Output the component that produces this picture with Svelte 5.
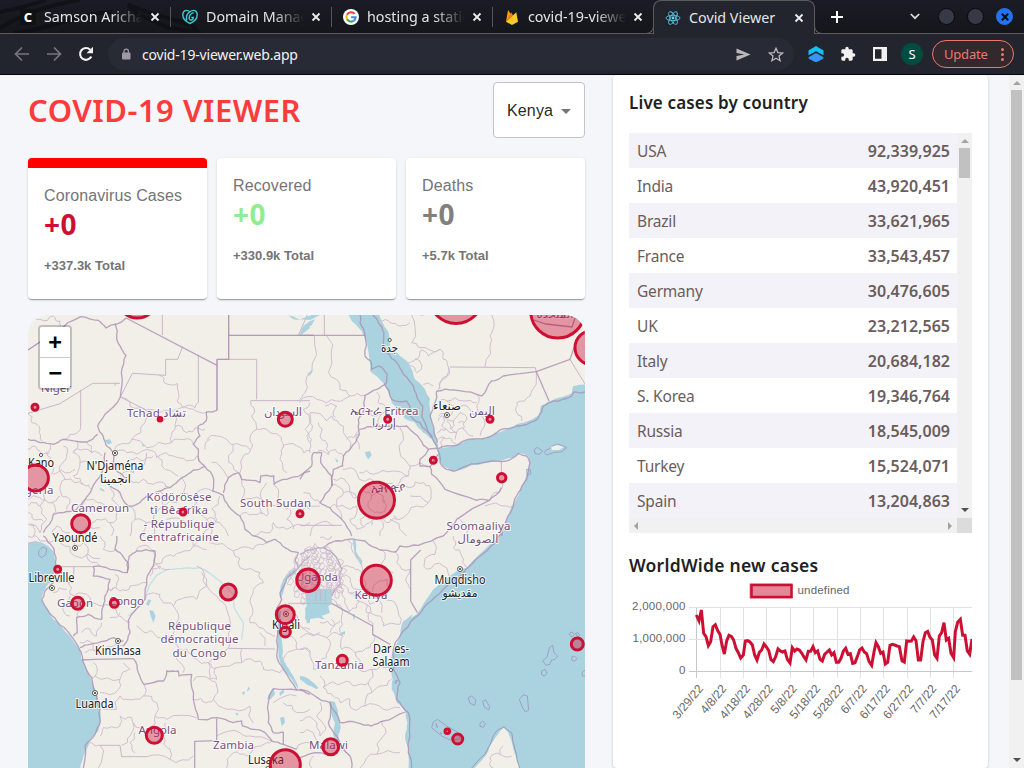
<script>
  const tabs = [
    { title: 'Samson Aricha', icon: 'c' },
    { title: 'Domain Manager', icon: 'g' },
    { title: 'hosting a static site', icon: 'google' },
    { title: 'covid-19-viewer', icon: 'fire' },
    { title: 'Covid Viewer', icon: 'react', active: true }
  ];
  const stats = [
    { label: 'Coronavirus Cases', value: '+0', total: '+337.3k Total', kind: 'cases' },
    { label: 'Recovered', value: '+0', total: '+330.9k Total', kind: 'recovered' },
    { label: 'Deaths', value: '+0', total: '+5.7k Total', kind: 'deaths' }
  ];
  const rows = [
    ['USA', '92,339,925'], ['India', '43,920,451'], ['Brazil', '33,621,965'],
    ['France', '33,543,457'], ['Germany', '30,476,605'], ['UK', '23,212,565'],
    ['Italy', '20,684,182'], ['S. Korea', '19,346,764'], ['Russia', '18,545,009'],
    ['Turkey', '15,524,071'], ['Spain', '13,204,863']
  ];

  // Subdivides a polyline with small seeded offsets, so that borders look surveyed.
  function rough(str, amp = 0.16) {
    const src = str.trim().split(/\s+/).map((p) => p.split(',').map(Number));
    let seed = Math.round(Math.abs(src[0][0] * 13 + src[0][1] * 7)) + 11;
    const rnd = () => ((seed = (seed * 16807 + 7) % 2147483647) / 2147483647) - 0.5;
    let pts = src;
    for (let k = 0; k < 2; k++) {
      const out = [pts[0]];
      for (let i = 1; i < pts.length; i++) {
        const [a, b] = pts[i - 1];
        const [c, d] = pts[i];
        const len = Math.hypot(c - a, d - b);
        if (len > 11) {
          const o = rnd() * Math.min(len, 45) * amp * 2;
          out.push([(a + c) / 2 - ((d - b) / len) * o, (b + d) / 2 + ((c - a) / len) * o]);
        }
        out.push(pts[i]);
      }
      pts = out;
    }
    return 'M' + pts.map(([x, y]) => x.toFixed(1) + ' ' + y.toFixed(1)).join('L');
  }

  // Map sheets: each is drawn on a 3x grid, offset to its quarter of the map.
  const sheets = [
    {
      x: 20, y: 306,
      straight: ['427,27 427,87', '626,27 626,160 591,160 591,313', '626,88 880,88', '710,160 626,160', '710,160 710,280', '692,284 870,284', '535,147 535,290', '862,27 835,88', '24,132 60,108', '218,232 300,232', '182,252 182,360', '437,160 473,160 488,122', '437,160 437,208 337,202 301,273', '24,322 120,293 218,232', '301,273 378,312'],
      thick: ['318,36 591,178', '626,27 626,160 591,160 591,313', '626,88 880,88', '24,132 60,108'],
      major: ['110,75 182,32 235,43 258,66 318,36', '285,52 290,98 305,130 318,148 304,200 301,273', '301,273 255,325 233,360 250,392 258,418 280,440 286,490 318,520', '233,385 200,408 130,400 100,415 60,410 24,400', '591,313 560,318 558,345 535,360 540,390 520,415 535,430 537,465 555,482', '555,482 520,492 485,515 450,545 420,555 375,575 340,600 325,600', '555,482 580,515 578,555 610,568 625,600 660,630 675,670 700,690', '610,560 625,515 655,500 665,520 720,530 722,510 762,510 762,535 800,520 870,495', '255,440 245,500 215,550 195,580 170,610 130,620 100,625 70,680', '325,600 300,560 270,540'],
      minor: ['182,360 150,385 130,400', '24,320 35,350 60,370 65,405', '24,45 60,40 100,30 120,45 122,60', '378,312 375,350 335,400', '301,273 330,300 378,312 450,312', '418,208 435,232 472,232 472,285 490,305 525,305 535,290', '455,312 465,370 455,410 380,425 335,400 300,415 285,430', '465,362 500,380 525,365 555,370', '462,312 520,310 560,318', '415,450 460,450 500,465 530,450', '415,450 425,480 475,510', '285,440 320,440 380,430 410,455 415,450', '330,460 370,465 400,450', '300,510 340,500 370,480 380,440', '692,284 695,330 710,370 690,400 692,430 670,450 665,520', '710,370 750,380 785,395 790,425 780,460 800,500', '785,425 830,420 850,440 870,435', '870,290 850,310 870,350 860,390 870,410', '560,400 590,390 620,400 640,415 680,420 690,430', '555,430 570,400', '640,415 625,450 640,480 655,500', '575,470 600,480 625,515', '90,415 80,440 100,470 95,505', '130,420 140,455 120,480 135,520 120,550 150,580 140,610', '170,405 160,440 180,470 160,510 190,535 215,550', '200,408 215,440 245,450', '24,430 50,425 65,445 90,440', '100,505 150,500 165,490', '24,580 60,575 95,590 120,570', '70,560 60,600 80,640 60,680', '24,620 40,640 70,645', '180,600 220,580 240,590 280,600', '270,540 275,580 300,610 280,650 230,640 215,650', '325,600 345,640 330,690', '345,640 380,660 370,690', '270,650 275,690', '420,555 430,600 400,640 400,690', '485,515 490,560 530,570 520,610 560,640 550,690', '600,570 575,610 590,640 570,690', '530,560 578,555', '660,630 700,625 740,630 745,600', '665,520 665,580 725,580 725,625', '725,580 740,530', '762,535 775,570 765,600 800,610 850,600 870,610', '700,690 750,680 760,650 800,670 870,650', '430,312 430,345', '285,240 290,230', '200,690 205,660 240,665', '100,690 110,660 150,680',
        '160,440 190,430 215,440', '180,470 220,480 250,470', '290,480 320,490 340,500', '450,545 430,530 400,535 370,520 340,530 318,520', '530,450 537,465', '455,410 480,400 520,415', '24,600 50,590 60,600', '30,650 45,670 40,690', '135,520 165,530 190,535', '95,590 100,625', '370,660 395,650 400,640', '430,600 470,590 490,560', '810,610 800,640 820,670', '745,600 765,600', '560,640 600,650 625,690', '440,640 500,650 520,640', '24,655 60,680'],
      lakes: ['255,402 270,400 276,412 262,415', '238,545 250,550 255,558 242,553', '835,90 850,68 866,58 870,66 850,82', '805,28 822,32 840,42 820,40', '365,412 375,420 368,422', '862,198 872,205 866,210']
    },
    {
      x: 300, y: 306,
      water: ['145,27 155,45 185,75 200,110 207,150 210,195 235,215 255,235 265,260 275,290 300,315 315,338 345,350 370,380 395,400 412,425 415,460 430,480 455,495 490,490 515,478 560,470 600,465 640,455 660,442 685,450 688,465 685,490 675,520 655,570 635,600 620,640 600,700 900,700 900,232 855,235 820,240 815,262 790,272 750,285 722,300 715,328 690,343 650,355 620,370 580,385 540,400 500,403 470,415 430,425 415,428 402,370 390,310 390,280 375,250 345,220 335,190 320,165 300,150 270,125 266,80 245,45 238,27'],
      straight: ['73,27 73,88', '450,183 706,185 709,197', '810,160 855,234', '604,465 604,500', '0,658 125,658'],
      thick: ['0,88 195,88', '709,197 747,285', '822,125 810,160 709,197'],
      major: ['195,88 195,150 212,165 215,190 235,180 262,205 260,230 230,250 195,268 193,300 175,340 178,385 150,430 130,450 128,480 100,490 95,540 60,590 90,605 125,640 155,690', '180,27 180,50 195,90', '218,27 235,50 252,80 250,110 262,140 290,170 310,205 340,240 350,270 368,300 365,330 395,390 412,425', '252,232 275,280 320,285 330,300 325,325 360,350 395,395', '178,370 230,362 290,360 320,360 360,400 385,430 415,428', '415,428 470,418 505,400 560,395 600,372 650,360 690,350 715,335 730,300 760,285 815,270 822,258 855,258', '410,255 460,252 530,265 545,270 575,225 610,210 709,197', '410,255 405,290 390,330 402,375 412,410', '385,430 360,460 360,480 390,482 415,445', '390,482 395,505 435,550 530,583 568,583 470,640 430,690', '604,545 568,583', '412,430 420,470 440,490 465,495 500,480 560,468 620,465 655,442 680,450 690,470 680,520 655,560 640,600 620,640 605,690', '0,520 35,480 40,440 65,440 62,470 95,510 97,540'],
      minor: ['240,45 270,50 300,60 330,50', '335,27 335,110 360,125 420,130', '575,27 570,90 575,100 555,183', '360,135 345,160 325,170', '360,135 385,150 400,140 420,130 430,160 445,183 430,220 415,250', '330,180 350,200 365,190 360,165 345,160', '445,183 440,210 420,250', '370,235 400,240', '709,197 690,270 650,290 650,320 665,345', '530,265 530,300 545,330 540,390', '440,285 490,285 530,290', '415,285 450,290 470,310 500,300 530,325', '480,320 500,340 490,370 520,390', '415,345 430,330 460,345 480,320', '412,380 440,370 470,380 490,365', '425,425 430,395 455,400 470,415', '440,345 450,370', '455,310 450,330 415,330', '360,27 370,28', '43,90 35,200 15,260 0,290', '80,90 85,200 120,250 150,270 195,268', '0,285 50,280 110,285 150,270', '30,320 15,370 35,400 30,440', '30,320 80,345 95,330 130,360 150,430', '75,300 110,300 105,335', '50,440 85,445 105,430 130,450', '230,258 235,290 255,300 240,330 240,362', '180,325 230,330 260,320', '178,430 180,370', '300,365 300,440 330,480 325,510 290,540', '330,480 390,482', '178,500 220,505 280,495 325,510', '128,490 170,500 178,520 240,525', '100,520 140,530 150,560 170,575', '285,540 330,545 370,530 390,540 385,590 350,600 300,640 280,630', '330,570 385,590', '170,600 150,640 170,670 210,650 225,640', '215,570 250,570 260,600 240,620 210,610 215,570', '240,640 240,690', '555,600 620,600 650,590', '607,500 607,545 570,583', '10,560 40,580 60,590', '0,620 60,600', '30,690 60,650 100,660', '480,640 500,690', '270,640 310,680 320,690', '310,300 300,285',
        '430,330 425,360 440,370', '460,345 455,370 470,380 465,400', '415,400 435,395', '475,350 495,350', '130,560 170,575 190,555 215,570', '95,540 120,545 130,560 110,590 125,640', '195,620 180,640 190,660', '90,605 120,600 150,610 170,600', '205,640 260,650 290,640', '140,400 160,395 178,385', '55,350 60,390 80,410 85,445', '250,540 285,540'],
      islands: ['738,432 750,428 757,420 775,414 800,425 785,437 760,440 740,447 733,440', '703,430 712,424 728,435 718,445 705,443', '680,490 690,490 693,502 682,510'],
      lakes: ['195,438 210,435 215,448 205,460 198,450', '0,80 10,60 30,45 45,40 35,58 15,70', '0,40 35,27 60,27 30,42', '28,198 40,190 30,208', '105,455 115,465 110,470', '215,645 220,650 214,660', '250,580 256,585 252,592']
    },
    {
      x: 20, y: 536,
      water: ['20,20 60,18 75,25 85,30 100,45 104,65 106,95 95,130 80,150 63,190 80,215 100,250 150,300 180,340 185,370 205,410 225,460 240,510 243,555 235,585 210,610 195,650 180,700 20,700',
        '768,225 775,260 772,310 775,360 790,400 815,430 835,460 820,420 800,390 787,360 785,310 780,270 785,225', '782,150 800,115 825,95 830,110 800,130 790,170 780,190', '740,490 755,465 762,455 765,475 752,490', '848,422 870,432 870,450 855,440', '855,215 870,210 870,260 860,262'],
      straight: ['160,92 220,92', '625,337 765,339', '108,92 162,92 160,140 110,138', '805,202 870,202', '235,628 300,628 305,662 380,662'],
      thick: ['185,372 225,370 340,368', '524,696 524,616 590,614 590,548', '790,588 790,625 830,640'],
      major: ['70,0 85,20 102,40 108,65 106,92', '106,92 100,140 75,165 65,190 85,225 110,255 150,295 178,340 188,375 215,425 230,480 240,520 240,560 225,595 195,630 190,696', '220,92 220,120 270,130 265,160 255,180 250,210 245,250 205,235 170,245 172,290 160,300', '220,92 270,100 322,110 325,80 300,50 285,40 290,0', '322,110 328,60 350,45 405,45 400,90 380,130 375,190 340,230 325,260 330,290 310,330', '340,368 355,410 372,445 430,435 440,405 475,405 477,420 515,415 520,490 535,550 590,545 640,560 665,555 668,570 700,580 735,590 755,615 790,625', '700,0 740,20 765,10 795,35 835,50 825,75 835,95 800,125 780,170 785,190 768,225', '768,225 780,260 772,300 770,360 790,400 830,462 760,458 745,500 745,560 760,590 790,588', '310,315 280,305 255,315 210,325 180,335', '835,95 870,60', '830,462 870,475'],
      minor: ['350,45 370,28 405,45', '190,20 200,60 240,90', '120,20 165,60 240,68', '24,0 60,15 100,15', '145,140 150,175 200,175 210,205 245,210', '100,170 140,160', '150,240 130,210 150,180', '265,160 300,165 330,150 380,140', '375,190 400,170 420,175 430,200 460,210 480,190 530,190 560,150 545,110', '390,120 420,90 450,100', '530,90 560,150 590,180 620,220 630,280 625,337', '420,100 400,45', '640,45 660,95 720,110 730,140 700,160 695,210 690,260 740,290 765,300', '560,0 570,20 640,45 700,40 740,20', '625,337 565,380 570,430 520,435', '565,380 530,370 500,340 475,335 460,300 430,310 400,290 375,290 350,270', '475,335 470,370 490,410', '570,430 590,430 590,395 665,380 665,340', '665,380 720,375 730,400 780,410 790,400', '700,560 690,510 620,520 580,490 590,450 570,430', '220,380 225,420 300,430 295,460 240,470', '300,430 330,400 310,380', '372,445 370,480 320,490 300,480 290,520 240,510', '370,480 410,500 405,540 440,550', '440,550 530,545', '335,545 300,540 300,570 250,575 240,600', '335,545 330,600 305,628', '405,540 390,580 340,560', '235,628 215,620 195,630', '240,628 235,696', '380,662 450,670 520,660', '345,590 330,620 345,650', '435,560 430,600 450,640 450,670', '185,290 210,280 230,300 245,260', '180,320 220,325 225,345 195,350', '245,210 290,225 310,250 330,260', '285,115 290,150 270,165', '680,660 740,620 755,615', '590,600 660,590 690,600 755,615', '620,696 640,650 680,660', '760,500 830,480', '790,500 830,530 870,520', '830,640 870,620', '790,230 820,225 830,260 870,280', '790,370 830,340 870,350', '800,300 830,320 830,340', '500,0 520,30 560,40', '720,290 735,330', '300,230 270,245', '530,20 480,50 440,60 400,90',
        '24,40 50,15', '150,0 165,30 190,20', '240,0 250,40 290,40', '170,245 180,225 200,200', '460,210 470,260 460,300', '225,420 215,425', '520,490 560,500 580,490', '590,395 565,380', '250,350 280,330 310,330'],
      river: '325,240 345,225 375,190 390,145 410,118 445,100 500,96 540,95 570,112 600,135 640,175 645,220 670,260 665,310',
      islands: ['56,45 68,33 80,38 78,55 65,65 56,58'],
      lakes: ['385,190 394,193 386,210 378,205', '388,222 400,225 407,240 400,260 392,240', '665,470 675,465 672,478', '685,452 690,458 680,468', '780,545 792,542 795,560 785,570', '778,470 790,460 793,468 780,480', '645,530 655,532 652,540']
    },
    {
      x: 300, y: 536,
      water: ['606,-12 570,25 500,95 480,100 400,160 350,235 310,255 303,275 300,300 275,360 270,400 278,430 275,460 290,500 315,525 322,560 315,600 325,640 325,700 520,700 560,655 570,630 590,600 610,575 625,590 640,640 660,700 900,700 900,-12',
        '15,170 30,160 50,158 95,158 95,205 85,210 90,230 65,240 75,250 55,245 15,250 20,215 18,190', '158,12 166,12 168,45 185,75 182,88 165,60', '90,495 105,498 115,540 122,570 115,600 130,655 100,600 105,560 92,520', '0,420 20,425 55,455 50,460 20,445 0,430', '158,235 164,235 162,255', '120,292 135,285 135,295 118,298', '315,255 340,235 325,262'],
      straight: ['0,202 95,202', '48,160 48,195', '62,160 62,195', '76,160 76,195'],
      thick: ['95,202 218,270 218,295 270,325', '362,42 332,72 332,195 352,230'],
      major: ['0,55 40,40 70,35 105,15 145,10 195,15 240,42 285,48 300,30 355,28 430,0', '605,-10 560,45 500,98 430,160 380,205 345,245 300,300 280,340 280,400 300,440 290,490 325,530 330,600 325,650 335,696', '70,35 110,65 125,100 120,145 95,180', '0,460 45,480 90,500 120,560 170,560 215,570 250,555 315,528', '90,500 85,560 110,600 150,660 155,696', '0,665 60,650 90,655'],
      minor: ['145,10 155,40 185,75 185,110', '240,42 255,60 245,90 280,110', '285,48 290,80 330,100 320,140 332,160', '125,100 160,95 185,110', '120,145 145,170 165,180 190,200', '190,200 200,230 240,240 250,270 300,265', '185,120 190,160 235,190 245,230', '262,130 255,190 290,210 300,265', '235,190 220,150 262,130', '170,180 170,215 150,225 110,205', '380,100 430,90 450,130', '380,100 385,60 405,55 400,15', '460,0 460,35 485,60 500,95', '0,305 40,300 80,305 100,290 130,300 125,340 165,350 210,335 218,295', '80,305 85,345 60,375', '165,350 175,400 215,400 270,395', '215,400 205,440 215,470 195,510 160,520 150,490 120,500', '0,340 30,345 40,400 60,395', '60,420 70,455 100,480 120,500', '70,455 130,440 165,450 205,440', '195,510 250,520 300,515', '275,430 240,450 215,470', '95,0 80,10 60,5', '110,205 125,240 120,290', '60,260 100,270 120,255', '60,290 0,270', '0,590 40,590 60,620', '35,696 40,660', '180,696 230,655 300,650', '230,655 250,600 245,555', '150,660 130,620', '60,500 50,540 75,570 60,600', '0,555 40,550 60,600', '580,696 570,665 600,655 635,660', '600,655 610,630',
        '100,170 130,165 135,190 150,225', '90,190 110,205', '105,150 125,160', '125,120 150,125 155,150 190,160', '150,175 185,175 210,205 225,200', '200,205 205,250 218,270', '95,250 90,290'],
      islands: ['395,575 400,558 412,550 440,570 475,590 480,608 455,614 425,600', '505,485 515,480 528,492 524,508 510,502', '548,495 557,492 569,512 566,522 552,512', '658,490 670,476 682,480 686,522 676,528 666,512', '748,335 758,328 762,350 773,360 765,370 755,372 750,385 738,388 728,375 742,362', '725,405 735,400 741,412 733,420 725,416', '540,562 548,556 557,563 550,574 540,571', '810,290 816,288 823,296 816,303 809,298', '826,292 833,290 839,297 834,303', '816,362 823,360 831,368 824,376 815,372', '846,410 852,404 860,404 860,422 848,420', '408,562 412,575', '420,590 426,594', '283,437 292,432 288,443'],
      coast: ['512,700 555,655 568,630 590,585 612,572 635,590 645,640 660,700'],
      lakes: []
    }
  ];

  // Small parishes around Kampala and the Nile, packed as a grid of wobbling cells.
  const cells = [];
  for (let i = 0; i < 11; i++) {
    for (let j = 0; j < 11; j++) {
      const x = 290 + i * 5, y = 548 + j * 5.6;
      if ((x - 315) ** 2 / 700 + (y - 575) ** 2 / 900 < 1 && !(y > 588 && x > 303 && x < 332)) {
        const w = ((i * 7 + j * 5) % 5) - 2, v = ((i * 3 + j * 11) % 5) - 2;
        cells.push(`M${x + w * 0.6} ${y + v * 0.6}l${3 + v} ${-2 + w * 0.7}l3 ${3 - v * 0.5}l${-2 + w * 0.5} 4l${-4 - v * 0.3} -1z`);
      }
    }
  }

  const places = [
    { t: 'Niger', x: 56, y: 392, w: 30 },
    { t: 'Tchad تشاد', x: 156.5, y: 416.5, w: 59 },
    { t: 'السودان', x: 283, y: 416, w: 38 },
    { t: 'ኤርትራ Eritrea', x: 384, y: 415, w: 69 },
    { t: 'إرتريا', x: 384, y: 427, w: 24 },
    { t: 'اليمن', x: 482, y: 415, w: 26 },
    { t: 'ኢትዮጵያ', x: 387.5, y: 492, w: 34 },
    { t: 'Nigeria', x: 33, y: 493.5, w: 41 },
    { t: 'Cameroun', x: 100, y: 512, w: 58 },
    { t: 'Ködörösêse', x: 179, y: 501, w: 65 },
    { t: 'tî Bêafrîka', x: 179, y: 514, w: 58 },
    { t: '- République', x: 179, y: 527.5, w: 71 },
    { t: 'Centrafricaine', x: 179, y: 541, w: 80 },
    { t: 'South Sudan', x: 275.5, y: 506.5, w: 71 },
    { t: 'Soomaaliya', x: 478.5, y: 530, w: 64 },
    { t: 'الصومال', x: 478, y: 543, w: 41 },
    { t: 'Gabon', x: 75, y: 606.5, w: 36 },
    { t: 'Congo', x: 126.5, y: 605, w: 35 },
    { t: 'République', x: 199.5, y: 629.5, w: 63 },
    { t: 'démocratique', x: 199.5, y: 643, w: 78 },
    { t: 'du Congo', x: 199.5, y: 656.5, w: 54 },
    { t: 'Uganda', x: 317, y: 580.5, w: 42 },
    { t: 'Kenya', x: 371, y: 598.5, w: 33 },
    { t: 'Tanzania', x: 339.5, y: 669, w: 49 },
    { t: 'Angola', x: 157.5, y: 734, w: 38 },
    { t: 'Zambia', x: 233.5, y: 748.5, w: 41 },
    { t: 'Malawi', x: 328.5, y: 748.5, w: 39 }
  ];
  const cities = [
    { t: 'جدة', x: 389.5, y: 352, w: 17, dx: 389.7, dy: 340, small: true },
    { t: 'صنعاء', x: 447, y: 410, w: 28, dx: 447, dy: 415 },
    { t: 'Kano', x: 41, y: 466.5, w: 26, dx: 41, dy: 455, small: true },
    { t: "N'Djaména", x: 115, y: 470, w: 57, dx: 115, dy: 453 },
    { t: 'انجمينا', x: 115.5, y: 483, w: 31 },
    { t: 'Yaoundé', x: 75, y: 542, w: 45, dx: 75, dy: 548 },
    { t: 'Libreville', x: 51.5, y: 582, w: 46, dx: 52, dy: 588 },
    { t: 'Kinshasa', x: 118, y: 655, w: 46, dx: 118, dy: 641 },
    { t: 'Luanda', x: 94.5, y: 707.5, w: 38, dx: 95, dy: 693 },
    { t: 'Kigali', x: 286, y: 629, w: 28, dx: 286, dy: 614 },
    { t: 'Lusaka', x: 266, y: 764, w: 36, dx: 268, dy: 769 },
    { t: 'Muqdisho', x: 460, y: 583.5, w: 51, dx: 460, dy: 569 },
    { t: 'مقديشو', x: 460, y: 597, w: 35 },
    { t: 'Dar es-', x: 391, y: 653, w: 36, dx: 391, dy: 670, small: true },
    { t: 'Salaam', x: 391, y: 666, w: 37 }
  ];
  const circles = [
    [137.3, 298, 20], [35, 407.3, 3], [160, 419.3, 1.8], [285.3, 419.3, 7], [35.4, 478, 13], [80.7, 523.7, 9],
    [183, 512, 3], [300, 513.7, 3], [456, 297, 26.5], [557.7, 311, 27], [592, 347.7, 17], [387.7, 419.3, 3],
    [490, 419.3, 3], [433.3, 460.3, 3], [501.7, 477.7, 4.2], [376.5, 500.3, 18], [57.7, 569.3, 3], [77.7, 603.3, 6],
    [114.3, 603.3, 4], [228.3, 592, 8], [285.3, 614.7, 9], [285.3, 632, 5], [154.3, 735.3, 8], [285.3, 764.7, 15],
    [308, 580.3, 11.2], [376.3, 580.3, 15], [342.3, 660.3, 5], [577.3, 644, 6], [447.3, 731.3, 2.3], [457.7, 739, 5], [330.7, 746.7, 8]
  ];

  const series = '229,75 237,93 244,60 251,130 258,140 265,167 272,155 279,110 286,104 293,122 300,133 306,165 313,192 320,153 327,136 334,139 341,150 348,175 355,188 362,204 370,195 376,153 383,152 390,156 397,165 404,195 411,210 418,187 425,180 432,162 439,171 446,181 453,209 460,215 467,200 474,177 481,183 488,186 495,183 502,208 510,219 517,173 524,183 531,177 538,180 545,189 552,201 558,210 565,184 572,184 579,170 586,188 593,183 600,208 607,213 614,193 621,186 628,180 635,195 642,188 649,217 656,217 663,205 670,184 677,175 684,193 691,191 698,220 705,218 712,200 719,180 726,174 733,186 740,191 747,214 755,226 762,186 768,158 775,170 782,190 789,186 796,222 803,217 810,166 817,163 824,165 831,168 838,170 846,212 853,216 860,153 867,154 874,153 881,141 888,152 895,210 902,210 909,155 916,128 923,124 930,142 937,150 944,195 951,205 958,138 965,128 972,98 979,150 986,145 993,190 1001,203 1006,125 1013,97 1021,88 1028,136 1035,136 1042,183 1049,193 1056,147';
  const dates = ['3/29/22', '4/8/22', '4/18/22', '4/28/22', '5/8/22', '5/18/22', '5/28/22', '6/7/22', '6/17/22', '6/27/22', '7/7/22', '7/17/22'];
  const ticks = [229, 299, 370, 439, 510, 580, 650, 720, 790, 860, 929, 1000].map((v) => 620 + v / 3);
</script>

<div class="window">
  <div class="tabstrip">
    <svg class="skin" width="340" height="33" viewBox="0 0 340 33"><path d="M0 28C30 10 55 4 80 0M0 12C20 8 38 3 46 0M14 33C50 30 74 14 112 12M128 5l22 8 42 12 7 8-32-6-30-13z" fill="none" stroke="#0b0c10" stroke-width="4" /></svg>
    {#each tabs as tab}
      <div class="tab" class:active={tab.active}>
        <span class="fav">
          {#if tab.icon === 'c'}
            <span class="fav-c">C</span>
          {:else if tab.icon === 'g'}
            <svg width="16" height="16" viewBox="0 0 16 16" fill="none" stroke="#3fc8d0" stroke-width="1.4"><path d="M8 14.500C3 12.500.8 8.800.8 5.800.8 1.200 4.800.2 8 2.800c3.200-2.600 7.200-1.600 7.200 3 0 3-2.200 6.700-7.200 8.700zM4.800 11.500C3.800 7.500 5 4.500 8 2.800M11.600 3.600C8.800 4.500 7 7 7.200 9.300c.6 2.700 4 2.200 4.200-.8H9.300" /></svg>
          {:else if tab.icon === 'google'}
            <svg width="16" height="16" viewBox="0 0 16 16"><circle cx="8" cy="8" r="8" fill="#fff" /><g fill="none" stroke-width="2.1"><path d="M11.600 4.900A4.600 4.600 0 0 0 4 5.700" stroke="#ea4335" /><path d="M4 5.700a4.600 4.600 0 0 0 0 4.600" stroke="#fbbc05" /><path d="M4 10.300a4.600 4.600 0 0 0 7 1.200" stroke="#34a853" /><path d="M11 11.500c1-.8 1.600-2 1.600-3.300H8.100" stroke="#4285f4" /></g></svg>
          {:else if tab.icon === 'fire'}
            <svg width="16" height="16" viewBox="0 0 16 16"><path d="M2 12.800 4 1l3.500 5z" fill="#ffa000" /><path d="M2 12.800 7.200 3.200 9 6.500z" fill="#f57c00" /><path d="M2 12.800 12.300 3.300 14 12.800 8 16z" fill="#ffca28" /></svg>
          {:else}
            <svg width="16" height="16" viewBox="0 0 16 16"><rect width="16" height="16" rx="1" fill="#20232a" /><g fill="none" stroke="#55c4de" stroke-width=".9"><ellipse cx="8" cy="8" rx="7" ry="2.700" /><ellipse cx="8" cy="8" rx="7" ry="2.700" transform="rotate(60 8 8)" /><ellipse cx="8" cy="8" rx="7" ry="2.700" transform="rotate(120 8 8)" /></g><circle cx="8" cy="8" r="1.400" fill="#61dafb" /></svg>
          {/if}
        </span>
        <span class="title">{tab.title}</span>
        <svg class="close" width="10" height="10" viewBox="0 0 10 10"><path d="M1.500 1.500l7 7M8.500 1.500l-7 7" stroke="#eee" stroke-width="1.800" /></svg>
      </div>
    {/each}
    <svg class="plus" width="12" height="12" viewBox="0 0 12 12"><path d="M6 0v12M0 6h12" stroke="#fff" stroke-width="2" /></svg>
    <svg class="chev" width="10" height="7" viewBox="0 0 10 7"><path d="M.8 1l4.200 4.200L9.200 1" fill="none" stroke="#ddd" stroke-width="1.700" /></svg>
    <span class="dot"></span>
    <span class="dot"></span>
    <span class="dot quit"><svg width="8" height="8" viewBox="0 0 8 8"><path d="M.8.8l6.400 6.400M7.200.8L.8 7.200" stroke="#0b0c10" stroke-width="2" /></svg></span>
  </div>

  <div class="toolbar">
    <span class="tool"><svg width="16" height="16" viewBox="0 0 16 16"><path d="M15 8H2M8 1.500L1.500 8 8 14.500" fill="none" stroke="#76777b" stroke-width="1.700" /></svg></span>
    <span class="tool"><svg width="16" height="16" viewBox="0 0 16 16"><path d="M1 8h13M8 1.500L14.500 8 8 14.500" fill="none" stroke="#76777b" stroke-width="1.700" /></svg></span>
    <span class="tool"><svg width="16" height="16" viewBox="0 0 16 16"><path d="M13.300 10.500A5.900 5.900 0 1 1 12.200 3.800" fill="none" stroke="#f1f1f1" stroke-width="2.100" /><path d="M15 .8v6.500H8.500z" fill="#f1f1f1" /></svg></span>
    <div class="omnibox">
      <svg width="10" height="13" viewBox="0 0 10 13"><rect x="1" y="4.500" width="8.500" height="7" rx="1" fill="#9b9ca3" /><path d="M3 5V3.300a2.200 2.200 0 0 1 4.400 0V5" fill="none" stroke="#9b9ca3" stroke-width="1.300" /></svg>
      <span class="url">covid-19-viewer.web.app</span>
      <svg class="send" width="15" height="13" viewBox="0 0 15 13"><path d="M.5.5L14.500 6.500.5 12.500V8L8.500 6.500.5 5z" fill="#b9b9bc" /></svg>
      <svg class="star" width="16" height="15" viewBox="0 0 16 15"><path d="M8 1.300l1.900 4.300 4.700.4-3.600 3.100 1.100 4.600L8 11.200l-4.100 2.500L5 9.100 1.400 6l4.700-.4z" fill="none" stroke="#b9b9bc" stroke-width="1.300" /></svg>
    </div>
    <span class="tool"><svg width="16" height="16" viewBox="0 0 16 16"><path d="M.5 4.500L8 0l7.500 4.500v4.700L8 5.200.5 9.200z" fill="#13c0f4" /><path d="M.5 11.200L8 7l7.500 4.200-.3 1.500L8 16.500.8 12.700z" fill="#3695f0" /></svg></span>
    <span class="tool"><svg width="16" height="16" viewBox="0 0 24 24"><path d="M20.500 11H19V7c0-1.100-.9-2-2-2h-4V3.500a2.500 2.500 0 0 0-5 0V5H4c-1.100 0-2 .9-2 2v3.800h1.500a2.700 2.700 0 0 1 0 5.400H2V20c0 1.100.9 2 2 2h3.800v-1.500a2.700 2.700 0 0 1 5.400 0V22H17c1.100 0 2-.9 2-2v-4h1.500a2.500 2.500 0 0 0 0-5z" fill="#f1f1f1" /></svg></span>
    <span class="tool"><svg width="14" height="14" viewBox="0 0 14 14"><path d="M0 0h14v14H0zM2 2.200v9.600h6.500V2.200z" fill="#f1f1f1" fill-rule="evenodd" /></svg></span>
    <span class="tool"><span class="avatar">S</span></span>
    <div class="update">Update<span class="kebab"><i></i><i></i><i></i></span></div>
  </div>

  <div class="page">
    <main>
      <header>
        <h1>COVID-19 VIEWER</h1>
        <div class="select">Kenya<i class="caret"></i></div>
      </header>
      <section class="stats">
        {#each stats as s}
          <article class="card {s.kind}">
            <div class="label">{s.label}</div>
            <div class="value">{s.value}</div>
            <div class="total">{s.total}</div>
          </article>
        {/each}
      </section>
      <section class="map">
        <svg width="557" height="453" viewBox="28 315 557 453">
          <rect x="28" y="315" width="557" height="453" fill="#f2efe9" />
          {#each sheets as s}
            <g transform="translate({s.x} {s.y}) scale(.33333)" fill="none" stroke-linejoin="round">
              {#each s.water ?? [] as w}<path d={rough(w, 0.06) + 'Z'} fill="#aad3df" />{/each}
            </g>
          {/each}
          {#each sheets as s}
            <g transform="translate({s.x} {s.y}) scale(.33333)" fill="none" stroke-linejoin="round">
              {#if s.river}<path d={rough(s.river, 0.05)} stroke="#c5e0e6" stroke-width="4" />{/if}
              {#each s.lakes as l}<polygon points={l} fill="#aad3df" />{/each}
              {#each s.minor as m}<path d={rough(m, 0.25)} stroke="#cfbdcf" stroke-width="2.900" />{/each}
              {#each s.straight as m}<polyline points={m} stroke="#c9b5c9" stroke-width="3" />{/each}
              {#each s.thick as m}<polyline points={m} stroke="#ab90b3" stroke-opacity=".8" stroke-width="4" />{/each}
              {#each s.major as m}<path d={rough(m, 0.1)} stroke="#ab90b3" stroke-opacity=".8" stroke-width="4" />{/each}
              {#each s.coast ?? [] as m}<path d={rough(m, 0.05)} stroke="#9d96b8" stroke-width="3" />{/each}
              {#each s.islands ?? [] as l}<polygon points={l} stroke="#9d9dbb" stroke-width="2.800" />{/each}
            </g>
          {/each}
          <path d={cells.join('')} fill="none" stroke="#cdbccf" stroke-width=".8" />
          <path d="M551 447l6-2 7 2-5 3-7 0z" fill="#f2efe9" />
          {#each cities as c}
            {#if c.dx}
              <circle cx={c.dx} cy={c.dy} r={c.small ? 1.6 : 2.5} fill="#fff" stroke="#4a4a40" stroke-width=".9" />
              {#if !c.small}<circle cx={c.dx} cy={c.dy} r="1" fill="#333" />{/if}
            {/if}
          {/each}
          {#each places as p}<text class="country" x={p.x} y={p.y} textLength={p.w}>{p.t}</text>{/each}
          {#each cities as p}<text class="city" x={p.x} y={p.y} textLength={p.w} lengthAdjust="spacingAndGlyphs">{p.t}</text>{/each}
          <text class="country" x="555" y="318" textLength="37">المتحدة</text>
          <path d="M534 320l12 4 26 3 3-9" fill="none" stroke="#ab90b3" stroke-width="1.300" />
          {#each circles as [x, y, r]}
            <circle cx={x} cy={y} {r} fill="#cc1034" fill-opacity=".4" stroke="#cc1034" stroke-width="3" />
          {/each}
        </svg>
        <div class="zoom"><span>+</span><span>−</span></div>
      </section>
    </main>

    <aside>
      <h3>Live cases by country</h3>
      <div class="tablebox">
        <div class="rows">
          {#each rows as [name, count]}
            <div class="row"><span>{name}</span><strong>{count}</strong></div>
          {/each}
        </div>
        <div class="vbar"><i class="up"></i><b></b><i class="down"></i></div>
        <div class="hbar"><i class="left"></i><i class="right"></i></div>
        <div class="corner"></div>
      </div>
      <h3 class="second">WorldWide new cases</h3>
      <svg class="chart" width="343" height="150" viewBox="629 580 343 150">
        <rect x="749.500" y="583.500" width="43" height="15" fill="#e58799" />
        <rect x="751.500" y="585" width="40" height="12" fill="none" stroke="#cc1034" stroke-width="2.500" />
        <text x="797.500" y="594" textLength="52">undefined</text>
        {#each ticks as x, i}
          <path d="M{Math.round(x) + 0.5} 607V678" stroke={i ? '#e2e2e2' : '#c8c8c8'} />
          <text class="date" transform="translate({x + 7.5} 689) rotate(-50)">{dates[i]}</text>
        {/each}
        <path d="M689 607.500H972M689 639.500H972" stroke="#e2e2e2" />
        <path d="M689 671.500H972" stroke="#c8c8c8" />
        <text class="num" x="685.500" y="610" textLength="53.500">2,000,000</text>
        <text class="num" x="685.500" y="642" textLength="53">1,000,000</text>
        <text class="num" x="685.500" y="674">0</text>
        <polyline transform="translate(620 590) scale(.33333)" points={series} fill="none" stroke="#cc1034" stroke-width="9" />
      </svg>
    </aside>
    <div class="pagebar"><i class="up"></i><b></b><i class="down"></i></div>
  </div>
</div>

<style>
  :global(body) { overflow: hidden; }
  .window { width: 1024px; height: 768px; display: flex; flex-direction: column; overflow: hidden; font-family: 'Noto Sans', sans-serif; background: #f5f6fa; }
  .tabstrip { position: relative; height: 34px; box-sizing: border-box; display: flex; align-items: center; padding-left: 10px; background: linear-gradient(#1a1c25, #15161b); border-bottom: 1px solid #5b5c60; flex: none; }
  .skin { position: absolute; left: 0; top: 0; opacity: .55; }
  .tab { position: relative; box-sizing: border-box; width: 161px; height: 20px; display: flex; align-items: center; padding: 0 10px 0 11px; border-right: 1px solid #55565b; flex: none; }
  .tab:nth-of-type(4) { border-color: transparent; }
  .tab.active { height: 34px; margin-left: -1px; width: 162px; align-self: flex-start; background: #23252e; border: 1px solid #5b5c60; border-bottom: 0; border-radius: 8px 8px 0 0; padding-left: 11px; }
  .tab.active::before, .tab.active::after { content: ''; position: absolute; bottom: 0; width: 8px; height: 8px; border-bottom: 1px solid #5b5c60; box-sizing: border-box; }
  .tab.active::before { left: -8px; border-right: 1px solid #5b5c60; border-radius: 0 0 8px 0; }
  .tab.active::after { right: -8px; border-left: 1px solid #5b5c60; border-radius: 0 0 0 8px; }
  .tab:not(.active) .fav { margin-left: -1px; }
  .fav { width: 16px; height: 16px; margin-right: 8px; display: flex; flex: none; }
  .tab:nth-of-type(n + 2):not(.active) .fav { margin-left: 0; }
  .fav-c { width: 16px; height: 16px; background: #111; color: #fff; font: 800 13px/16px 'Noto Sans', sans-serif; text-align: center; }
  .title { width: 98px; height: 20px; line-height: 20px; font-size: 14.300px; color: #e4e4e6; white-space: nowrap; overflow: hidden; mask-image: linear-gradient(90deg, #000 68%, transparent); }
  .active .title { mask-image: none; width: 99px; }
  .close { margin-left: 7px; flex: none; }
  .tab:first-of-type .close { margin-left: 8px; }
  .plus { margin-left: 16px; }
  .chev { margin-left: 67px; }
  .dot { width: 17px; height: 17px; box-sizing: border-box; border-radius: 50%; background: #363a47; border: 1px solid #08090c; margin-left: 12px; display: flex; align-items: center; justify-content: center; flex: none; }
  .chev + .dot { margin-left: 18px; }
  .dot.quit { background: #2272f2; border-color: #2272f2; }
  .toolbar { height: 41px; box-sizing: border-box; display: flex; align-items: center; padding-left: 6px; background: #23252e; border-bottom: 1px solid #050506; flex: none; }
  .tool { width: 32px; height: 32px; display: flex; align-items: center; justify-content: center; flex: none; }
  .omnibox { width: 686px; height: 32px; box-sizing: border-box; margin: 0 6px; padding: 0 10px 0 13px; border-radius: 16px; background: #282a36; display: flex; align-items: center; flex: none; }
  .url { margin-left: 11px; font-size: 14px; color: #f2f2f2; letter-spacing: -.19px; }
  .send { margin-left: auto; margin-right: 17px; }
  .avatar { width: 22px; height: 22px; border-radius: 50%; background: #004d40; color: #fff; font: 13px/22px 'Noto Sans', sans-serif; text-align: center; }
  .update { width: 82px; height: 28px; box-sizing: border-box; margin-left: 4px; border: 1px solid #e9796d; border-radius: 14px; background: #33292d; color: #e9796d; font-size: 13px; letter-spacing: -.2px; display: flex; align-items: center; justify-content: space-between; padding: 0 9px 0 11px; }
  .kebab { display: flex; flex-direction: column; gap: 2px; }
  .kebab i { width: 3px; height: 3px; border-radius: 50%; background: #e9796d; }

  .page { flex: 1; display: flex; min-height: 0; padding-left: 28px; }
  main { width: 557px; display: flex; flex-direction: column; flex: none; }
  header { display: flex; justify-content: space-between; align-items: center; padding-top: 7px; height: 56px; }
  h1 { margin: 0; color: #fc3c3c; font-size: 31px; font-weight: 600; letter-spacing: .5px; white-space: nowrap; }
  .select { width: 92px; height: 56px; box-sizing: border-box; border: 1px solid #c4c4c4; border-radius: 4px; background: #fff; color: rgba(0, 0, 0, .87); display: flex; align-items: center; padding-left: 13px; padding-top: 2px; font: 16px 'Liberation Sans', sans-serif; letter-spacing: .15px; }
  .caret { margin-left: 8px; border: 5px solid transparent; border-top-color: #757575; border-bottom: 0; }
  .stats { display: flex; gap: 10px; margin-top: 20px; }
  .card { width: 179px; height: 141px; box-sizing: border-box; padding: 16px; border-radius: 4px; background: #fff; box-shadow: 0 2px 1px -1px rgba(0, 0, 0, .2), 0 1px 1px rgba(0, 0, 0, .14), 0 1px 3px rgba(0, 0, 0, .12); font-family: 'Liberation Sans', sans-serif; color: #757575; }
  .cases { border-top: 10px solid red; }
  .label { font-size: 16px; line-height: 24px; letter-spacing: .12px; white-space: nowrap; }
  .value { font: 700 28px/32px 'Noto Sans', sans-serif; color: #808080; letter-spacing: .5px; }
  .cases .value { color: #cc1034; }
  .recovered .value { color: lightgreen; }
  .total { margin-top: 16px; font-size: 13px; font-weight: 700; line-height: 20px; }
  .map { position: relative; margin-top: 16px; height: 453px; border-radius: 20px 20px 0 0; overflow: hidden; }
  .map svg { display: block; }
  .country, .city { font-family: 'Noto Sans', 'DejaVu Sans', sans-serif; font-size: 12px; text-anchor: middle; paint-order: stroke; stroke: rgba(255, 255, 255, .75); stroke-width: 2px; fill: #75527f; }
  .country { font-size: 11.500px; }
  .city { fill: #222; }
  .zoom { position: absolute; left: 10px; top: 10px; border: 2px solid rgba(0, 0, 0, .2); border-radius: 4px; background-clip: padding-box; overflow: hidden; }
  .zoom span { display: block; width: 30px; height: 30px; background: #fff; font: bold 22px/30px 'DejaVu Sans Mono', monospace; text-align: center; color: #000; }
  .zoom span + span { border-top: 1px solid #ccc; }

  aside { width: 375px; box-sizing: border-box; margin-left: 28px; padding: 16px 16px 0; background: #fff; border-radius: 4px; box-shadow: 0 1px 3px rgba(0, 0, 0, .2); flex: none; }
  h3 { margin: 0; height: 24px; line-height: 24px; font-size: 17px; font-weight: 600; letter-spacing: .15px; color: #212121; white-space: nowrap; }
  .tablebox { margin-top: 18px; display: grid; grid-template: 385px 15px / 328px 15px; }
  .row { height: 35px; display: flex; justify-content: space-between; align-items: center; padding: 0 8px; color: #6a5d5d; font-size: 16px; }
  .row:nth-child(odd) { background: #f3f2f8; }
  .row span { font-size: 15.500px; letter-spacing: -.2px; }
  .row strong { font-weight: 600; margin-right: -1px; }
  .vbar, .hbar { background: #f1f1f1; display: flex; align-items: center; justify-content: space-between; }
  .vbar { flex-direction: column; }
  .vbar b { width: 11px; height: 30px; background: #c1c1c1; margin-bottom: auto; margin-top: 5px; }
  .corner { background: #dcdcdc; }
  .up, .down, .left, .right { width: 0; height: 0; border: 4px solid transparent; }
  .up { border-top: 0; border-bottom-color: #a3a3a3; margin-top: 6px; }
  .down { border-bottom: 0; border-top-color: #505050; margin-bottom: 6px; }
  .left { border-left: 0; border-right-color: #a3a3a3; margin-left: 5px; }
  .right { border-right: 0; border-left-color: #a3a3a3; margin-right: 5px; }
  .second { margin-top: 20px; font-size: 17.500px; letter-spacing: .25px; }
  .chart { display: block; margin-top: 3px; }
  .chart text { font: 11.500px 'Liberation Sans', sans-serif; fill: #666; }
  .chart .num, .chart .date { text-anchor: end; }
  .chart .date { font-size: 12px; }
  .pagebar { width: 15px; margin-left: auto; background: #f1f1f1; display: flex; flex-direction: column; align-items: center; }
  .pagebar b { width: 11px; height: 590px; background: #c1c1c1; margin-top: 5px; margin-bottom: auto; }
</style>
